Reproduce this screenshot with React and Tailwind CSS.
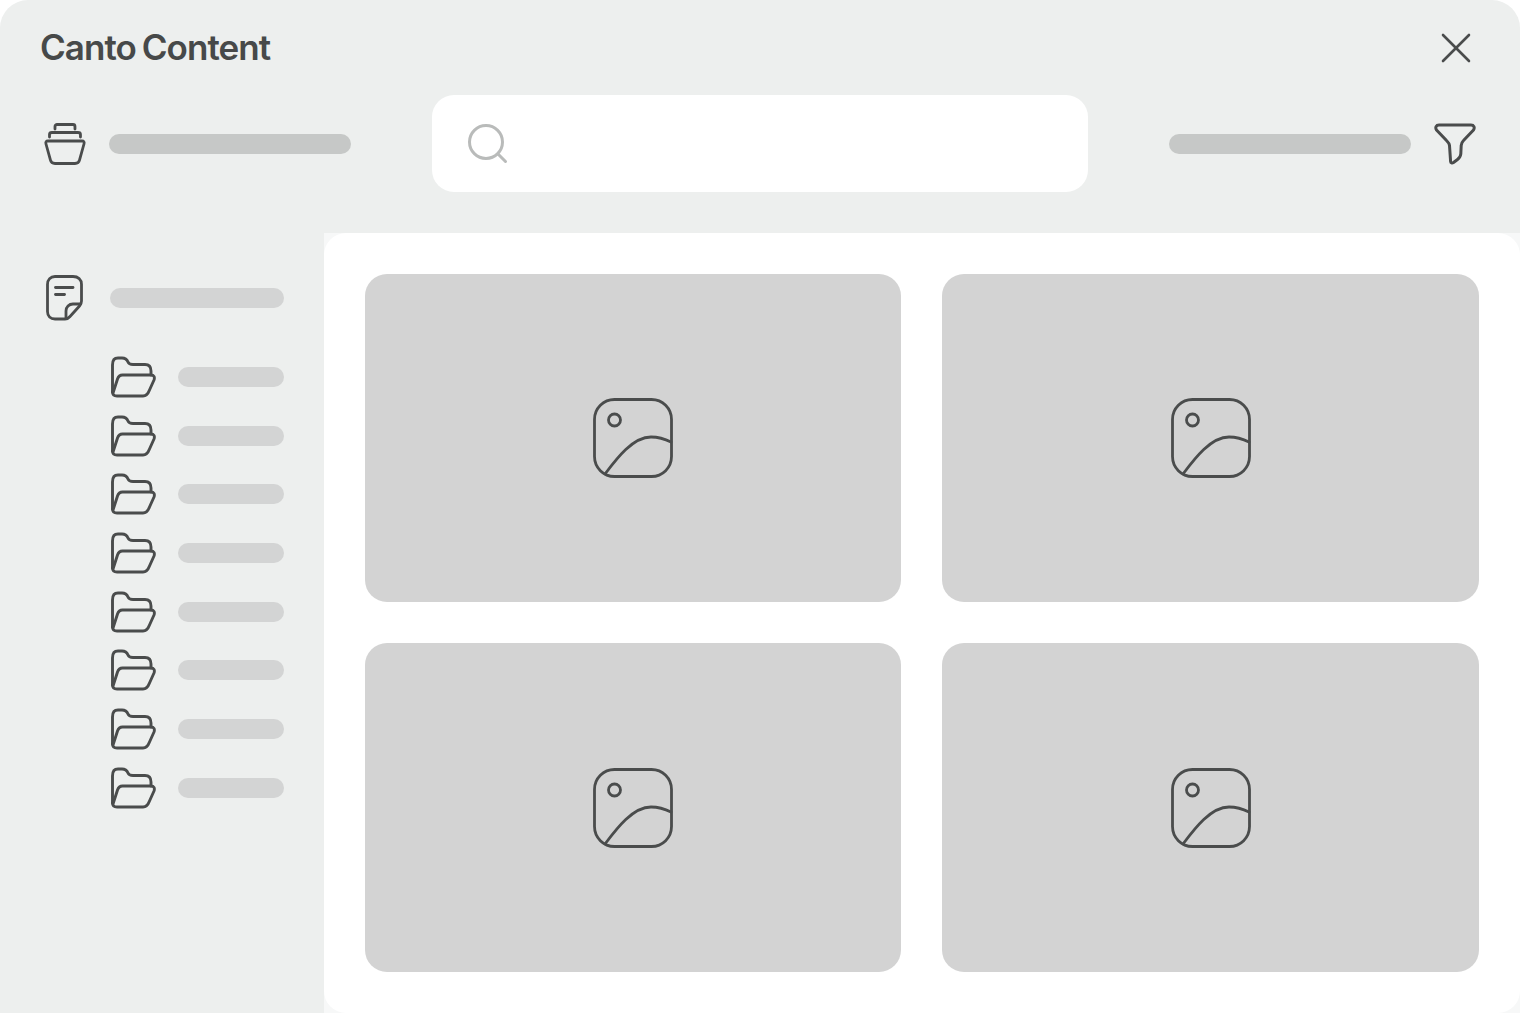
const FONT = { fontFamily: 'Inter, "Liberation Sans", sans-serif' };

const CloseIcon = () => (
  <svg width="32" height="32" viewBox="0 0 32 32" fill="none" stroke="#4a4c4c" strokeWidth="2.6" strokeLinecap="round">
    <path d="M3 3L29 29" />
    <path d="M29 3L3 29" />
  </svg>
);

const BoxIcon = () => (
  <svg width="42" height="44" viewBox="0 0 42 44" fill="none" stroke="#4a4c4c" strokeWidth="2.8" strokeLinecap="round" strokeLinejoin="round">
    <path d="M11 7V4.5C11 3.2 12 2.5 13 2.5H29C30 2.5 31 3.2 31 4.5V7" />
    <path d="M5.5 15V12.5C5.5 11 6.5 10.5 8 10.5H34C35.5 10.5 36.5 11 36.5 12.5V15" />
    <path d="M4 19H38C39.8 19 40.6 20.2 40 22L35.6 38C35 40.4 33.4 41.5 31 41.5H11C8.6 41.5 7 40.4 6.4 38L2 22C1.4 20.2 2.2 19 4 19Z" />
  </svg>
);

const NoteIcon = () => (
  <svg width="38" height="46" viewBox="0 0 38 46" fill="none" stroke="#4a4c4c" strokeWidth="2.8" strokeLinecap="round" strokeLinejoin="round">
    <path d="M9 1.5H27C32 1.5 35.5 4.5 35.5 9.5V26C35.5 28 34.8 29.5 33.5 31L24 41.5C22.5 43.3 21 44 19 44H9C4.5 44 1.5 41 1.5 36.5V9.5C1.5 4.5 4.5 1.5 9 1.5Z" />
    <path d="M9.5 12.5H27" />
    <path d="M9.5 19.5H18.5" />
    <path d="M34.5 29H27C23 29 20 32 20 36V43.5" />
  </svg>
);

const FolderIcon = () => (
  <svg width="46" height="42" viewBox="0 0 46 42" fill="none" stroke="#4a4c4c" strokeWidth="2.9" strokeLinecap="round" strokeLinejoin="round">
    <path d="M2.5 36V9C2.5 4 4.5 2 8 2H12C15.5 2 17 3.5 18 6C18.8 8 20 8.5 23 8.5H35C39 8.5 41 11 41 15V19" />
    <path d="M3 37L7.5 23C8.5 20 10 19 12.5 19H41C44 19 45 21 44 24L39.5 34C38 38 36 40 33 40H7C4 40 2.5 38.5 2.5 36" />
  </svg>
);

const FilterIcon = () => (
  <svg width="42" height="42" viewBox="0 0 42 42" fill="none" stroke="#4a4c4c" strokeWidth="3" strokeLinecap="round" strokeLinejoin="round">
    <path d="M5 2H37C40 2 41 4.5 39.5 7L29.5 17.5C28 19 27.5 20.5 27.2 22.5L26.8 31C26.6 33.5 25.5 35 23.5 36.5L19.5 39.5C18 40.5 16.8 40 16.6 38.5L15.5 22.5C15.3 20.5 14 19 12.5 17.5L2.5 7C1 4.5 2 2 5 2Z" />
  </svg>
);

const SearchIcon = () => (
  <svg width="44" height="44" viewBox="0 0 44 44" fill="none" stroke="#b9bbba" strokeWidth="3" strokeLinecap="round">
    <circle cx="20" cy="20" r="16.5" />
    <path d="M32 32L39.5 39.5" />
  </svg>
);

const ImageIcon = () => (
  <svg width="80" height="80" viewBox="0 0 80 80" fill="none" stroke="#4a4c4c" strokeWidth="2.8" strokeLinecap="round">
    <rect x="1.5" y="1.5" width="77" height="77" rx="20" />
    <circle cx="21.5" cy="22" r="6" />
    <path d="M12 76C24 60 40 39 58 39C65 39 72 41 78 44" />
  </svg>
);

const Bar = ({ className }) => <div className={`h-5 rounded-full ${className}`} />;

const folders = [0, 1, 2, 3, 4, 5, 6, 7];
const cards = [0, 1, 2, 3];

export default function App() {
  return (
    <div className="h-[1013px] w-[1520px] overflow-hidden bg-white" style={FONT}>
      <div className="flex h-full flex-col rounded-t-[28px] bg-[#edefee]">
        {/* title */}
        <div className="flex h-[95px] items-start justify-between pl-10 pr-[48px] pt-[25px]">
          <h1 className="text-[35px] font-semibold leading-[44px] tracking-[-0.027em] [word-spacing:-2px] text-[#474949]">Canto Content</h1>
          <div className="mt-[7px]">
            <CloseIcon />
          </div>
        </div>

        {/* toolbar */}
        <div className="flex h-[97px] items-center pl-11 pr-11">
          <BoxIcon />
          <Bar className="ml-[23.5px] w-[241.5px] bg-[#c6c8c7]" />
          <div className="ml-[81px] flex h-[97px] w-[656.5px] items-center rounded-[22px] bg-white pl-[34px]">
            <SearchIcon />
          </div>
          <Bar className="ml-[81.5px] w-[241.5px] bg-[#c6c8c7]" />
          <div className="ml-[23.5px]">
            <FilterIcon />
          </div>
        </div>

        <div className="mt-[41px] flex min-h-0 flex-1">
          {/* sidebar */}
          <div className="w-[324px] shrink-0 pl-[46px] pt-[42px]">
            <div className="flex items-center">
              <NoteIcon />
              <Bar className="ml-[25.5px] w-[174.5px] bg-[#d3d4d4]" />
            </div>
            <div className="mt-[35px] flex flex-col gap-[16.7px] pl-[64px]">
              {folders.map((i) => (
                <div key={i} className="flex items-center">
                  <FolderIcon />
                  <Bar className="ml-[22px] w-[106px] bg-[#d3d4d4]" />
                </div>
              ))}
            </div>
          </div>

          {/* content */}
          <div className="flex-1 bg-[#f7f8f8]">
            <div className="grid h-full grid-cols-[536px_537px] grid-rows-[328px_329px] gap-[41px] rounded-[22px] bg-white p-[41px]">
              {cards.map((i) => (
                <div key={i} className="flex items-center justify-center rounded-[22px] bg-[#d3d3d3]">
                  <ImageIcon />
                </div>
              ))}
            </div>
          </div>
        </div>
      </div>
    </div>
  );
}
